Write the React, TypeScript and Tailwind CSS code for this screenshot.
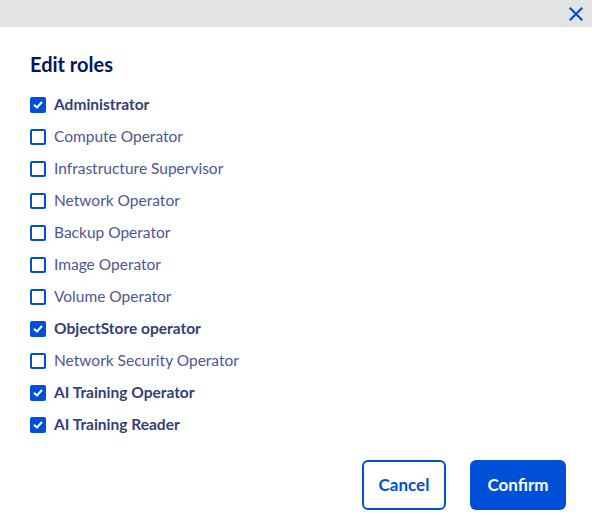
import React, { useState } from 'react'

const roles = [
  { name: 'Administrator', checked: true },
  { name: 'Compute Operator', checked: false },
  { name: 'Infrastructure Supervisor', checked: false },
  { name: 'Network Operator', checked: false },
  { name: 'Backup Operator', checked: false },
  { name: 'Image Operator', checked: false },
  { name: 'Volume Operator', checked: false },
  { name: 'ObjectStore operator', checked: true },
  { name: 'Network Security Operator', checked: false },
  { name: 'AI Training Operator', checked: true },
  { name: 'AI Training Reader', checked: true },
]

export default function App() {
  const [state, setState] = useState(roles.map(r => r.checked))

  return (
    <div className="w-[592px] h-[517px] bg-white overflow-hidden" style={{ fontFamily: "Lato, 'Liberation Sans', sans-serif" }}>
      <div className="h-[27px] bg-[#e3e3e3] flex items-center justify-end pr-[8px]">
        <button className="text-[#0050d7]">
          <svg width="16" height="16" viewBox="0 0 16 16" fill="none" stroke="currentColor" strokeWidth="2.2" strokeLinecap="square">
            <path d="M2.5 2.5L13.5 13.5M13.5 2.5L2.5 13.5" />
          </svg>
        </button>
      </div>

      <div className="pl-[30px] pr-[26px]">
        <h2 className="mt-[24px] text-[20px] leading-[26px] font-bold text-[#00185e]">Edit roles</h2>

        <ul className="mt-[12px] flex flex-col">
          {roles.map((r, i) => (
            <li key={r.name} className="h-[32px] flex items-center gap-[8px]">
              <button
                onClick={() => setState(s => s.map((v, j) => (j === i ? !v : v)))}
                className={`w-[16px] h-[16px] rounded-[2px] flex items-center justify-center ${state[i] ? 'bg-[#0050d7]' : 'border-2 border-[#0050d7] bg-white'}`}
              >
                {state[i] && (
                  <svg width="10" height="10" viewBox="0 0 10 10" fill="none" stroke="white" strokeWidth="2" strokeLinecap="round" strokeLinejoin="round">
                    <path d="M1.5 5.3L4 7.5L8.5 2.5" />
                  </svg>
                )}
              </button>
              <span className={`text-[15.5px] ${state[i] ? 'font-bold text-[#333e7a]' : 'text-[#4d5693]'}`}>{r.name}</span>
            </li>
          ))}
        </ul>

        <div className="mt-[19px] flex justify-end gap-[24px]">
          <button className="w-[84px] h-[50px] rounded-[6px] border-2 border-[#0050d7] text-[#0050d7] text-[17px] font-bold bg-white">
            Cancel
          </button>
          <button className="w-[96px] h-[50px] rounded-[6px] bg-[#0050d7] text-white text-[17px] font-bold">
            Confirm
          </button>
        </div>
      </div>
    </div>
  )
}
